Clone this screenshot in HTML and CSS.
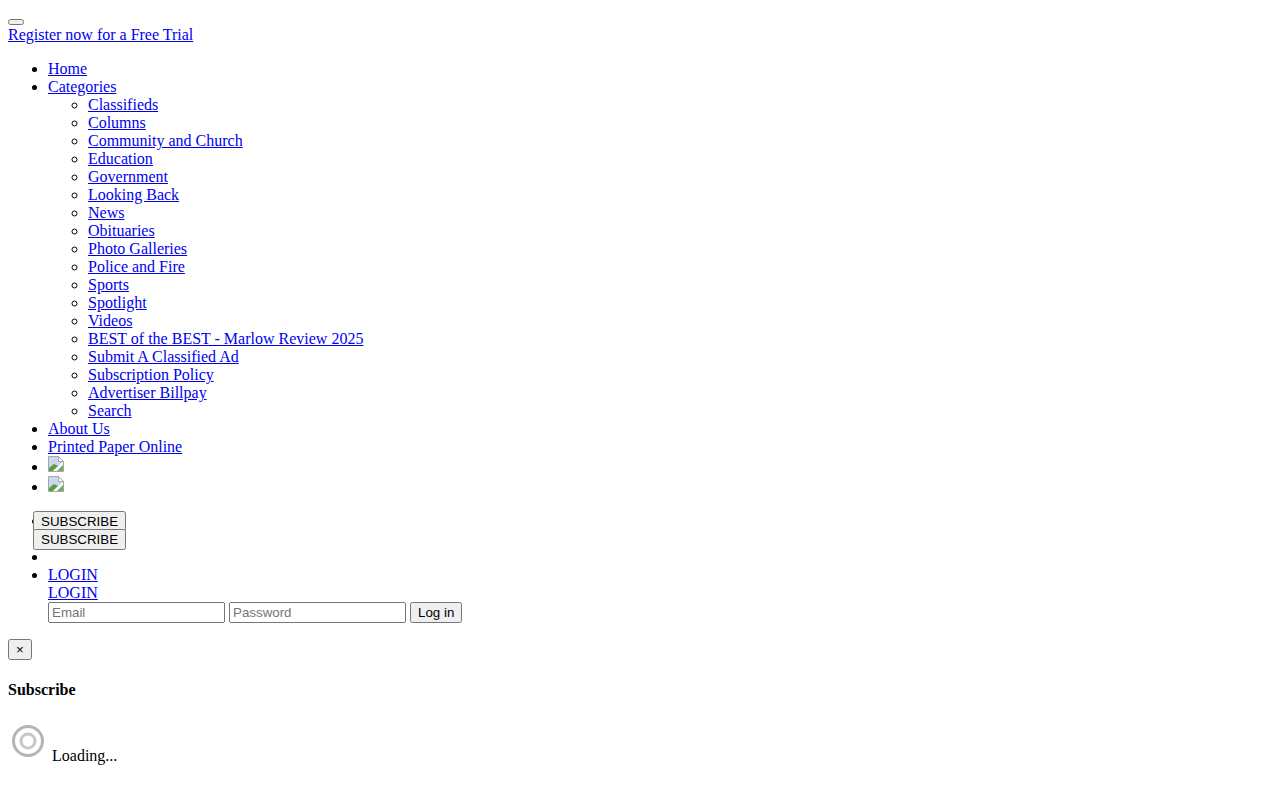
FILE: index.html
```html
<!DOCTYPE html>
<html lang="en">

<head>
    <meta charset="UTF-8" />
    <meta name="viewport" content="width=device-width, initial-scale=1.0" />
    <title>Marlow Review</title>
    <link rel="stylesheet" href="styles.css">
</head>

<body>

    <!-- Top bar -->
    <div class="toggle-line"><button class="toggle" type="button"></button></div>
    <a href="#">Register now for a Free Trial</a>

    <!-- Main nav -->
    <ul class="menu">
        <li><a href="#">Home</a></li>
        <li>
            <a href="#">Categories</a>
            <ul class="submenu">
                <li><a href="#">Classifieds</a></li>
                <li><a href="#">Columns</a></li>
                <li><a href="#">Community and Church</a></li>
                <li><a href="#">Education</a></li>
                <li><a href="#">Government</a></li>
                <li><a href="#">Looking Back</a></li>
                <li><a href="#">News</a></li>
                <li><a href="#">Obituaries</a></li>
                <li><a href="#">Photo Galleries</a></li>
                <li><a href="#">Police and Fire</a></li>
                <li><a href="#">Sports</a></li>
                <li><a href="#">Spotlight</a></li>
                <li><a href="#">Videos</a></li>
                <li><a href="#">BEST of the BEST - Marlow Review 2025</a></li>
                <li><a href="#">Submit A Classified Ad</a></li>
                <li><a href="#">Subscription Policy</a></li>
                <li><a href="#">Advertiser Billpay</a></li>
                <li><a href="#">Search</a></li>
            </ul>
        </li>
        <li><a href="#">About Us</a></li>
        <li><a href="#">Printed Paper Online</a></li>
        <li>
            <a href="#" class="social" aria-label="Facebook">
                <svg class="broken" viewBox="0 0 16 16" width="16" height="16">
                    <path d="M0.5 0.5H10.5L15.5 5.5V15.5H0.5Z" fill="#c9d7f1" stroke="#a6a6a6" />
                    <path d="M10.5 0.5V5.5H15.5Z" fill="#fff" stroke="#a6a6a6" />
                    <path d="M1 15V12L6 8L10 10L5 15Z" fill="#5b9e3a" />
                    <path d="M5 15L15 6V9L9 15Z" fill="#fff" />
                    <path d="M9 15L15 9V15Z" fill="#7aa86a" />
                </svg>
            </a>
        </li>
        <li>
            <a href="#" class="social" aria-label="Twitter">
                <svg class="broken" viewBox="0 0 16 16" width="16" height="16">
                    <path d="M0.5 0.5H10.5L15.5 5.5V15.5H0.5Z" fill="#c9d7f1" stroke="#a6a6a6" />
                    <path d="M10.5 0.5V5.5H15.5Z" fill="#fff" stroke="#a6a6a6" />
                    <path d="M1 15V12L6 8L10 10L5 15Z" fill="#5b9e3a" />
                    <path d="M5 15L15 6V9L9 15Z" fill="#fff" />
                    <path d="M9 15L15 9V15Z" fill="#7aa86a" />
                </svg>
            </a>
        </li>
        <li>
            <div class="subscribe-row">
                <button type="button">SUBSCRIBE</button>
                <button type="button">SUBSCRIBE</button>
            </div>
        </li>
        <li></li>
        <li>
            <a href="#">LOGIN</a><br>
            <a href="#">LOGIN</a>
            <form class="login">
                <input type="text" placeholder="Email">
                <input type="password" placeholder="Password">
                <button type="submit">Log in</button>
            </form>
        </li>
    </ul>

    <!-- Subscribe modal -->
    <button class="close" type="button">×</button>
    <h4 class="modal-title">Subscribe</h4>
    <div class="loading">
        <svg class="spinner" viewBox="0 0 40 40" width="40" height="40">
            <circle cx="20" cy="20" r="14.5" fill="none" stroke="#b4b4b4" stroke-width="3" />
            <circle cx="20" cy="20" r="7" fill="none" stroke="#c8c8c8" stroke-width="3" />
        </svg>
        Loading...
    </div>

</body>

</html>
```

FILE: styles.css
```css
body {
    margin: 8px;
    font-family: "Liberation Serif", serif;
    font-size: 16px;
    color: #000;
    background: #fff;
}

a {
    color: #0000ee;
}

button,
input {
    font-family: "Liberation Sans", sans-serif;
    font-size: 13.3333px;
}

.toggle-line {
    height: 7px;
    padding-top: 11px;
}

.toggle {
    display: block;
    width: 16px;
    height: 6px;
    padding: 0;
}

.menu {
    margin: 16px 0;
    padding-left: 40px;
}

.submenu {
    padding-left: 40px;
}

.social {
    display: inline-block;
}

/* sits on top of the list bullet */
.subscribe-row {
    position: relative;
    margin: 15px 0 0 -15px;
    height: 37px;
}

.subscribe-row button {
    display: block;
    margin-bottom: -3px;
}

.login input {
    width: 169px;
}

.close {
    display: block;
}

.modal-title {
    margin: 21px 0;
    font-size: 16px;
}

.loading {
    padding-top: 1px;
}
```
